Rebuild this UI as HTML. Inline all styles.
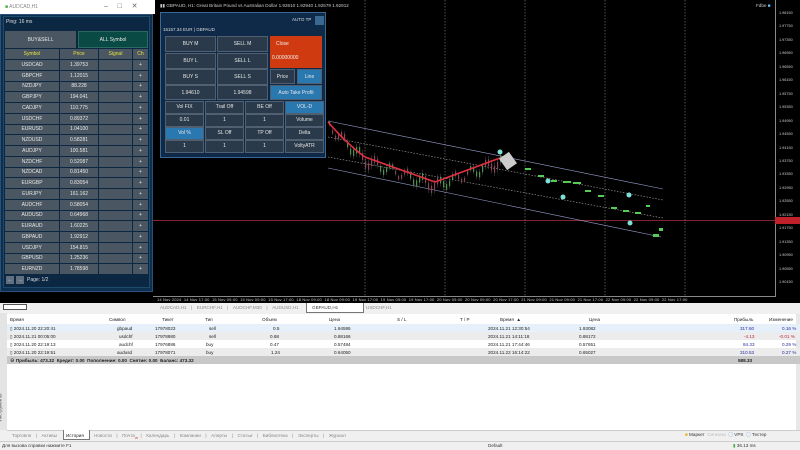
<!DOCTYPE html>
<html><head><meta charset="utf-8"><style>
*{margin:0;padding:0;box-sizing:border-box}
body{width:800px;height:450px;overflow:hidden;background:#f0f0f0;font-family:"Liberation Sans","Noto Sans CJK SC",sans-serif;position:relative}
.a{position:absolute}
.t{font-size:5px;white-space:nowrap}
.lp{background:#0b2742}
.c{position:absolute;display:flex;align-items:center;justify-content:center;font-size:5px;color:#e8e8e8;background:#4a5661;white-space:nowrap}
.tb{position:absolute;display:flex;align-items:center;justify-content:center;font-size:5px;color:#e6e6e6;background:#2a3a4a;border:1px solid #506070}
.row{position:absolute;left:0;width:796px;height:8px;font-size:4.6px;color:#222}
.row span{position:absolute;top:1.5px;white-space:nowrap}
</style></head><body>
<div class="a" style="left:153px;top:0;width:647px;height:303px;background:#000"></div>
<div class="a" style="left:0;top:290px;width:155px;height:13px;background:#000"></div>
<div class="a t" style="left:160px;top:3px;color:#ccc;font-size:4.6px">▮▮ GBPAUD, H1: Great Britain Pound vs Australian Dollar 1.92610 1.92940 1.92579 1.92912</div>
<div class="a t" style="left:756px;top:3px;color:#ccc;font-size:4.6px">Fdbe <span style="color:#6cf">■</span></div>
<div class="a" style="left:775px;top:0;width:1px;height:297px;background:#888"></div>
<div class="a" style="left:153px;top:296px;width:623px;height:1px;background:#888"></div>
<div id="pa"></div>
<svg class="a" style="left:153px;top:0" width="647" height="303">
<g stroke="#888" stroke-dasharray="1.5 1.5" stroke-width="0.6">
<line x1="212" y1="0" x2="212" y2="296"/><line x1="292" y1="0" x2="292" y2="296"/><line x1="372" y1="0" x2="372" y2="296"/><line x1="452" y1="0" x2="452" y2="296"/><line x1="532" y1="0" x2="532" y2="296"/>
</g>
<line x1="0" y1="220.5" x2="622" y2="220.5" stroke="#b03040" stroke-width="0.8"/>
<rect x="622" y="217" width="25" height="7" fill="#c0202a"/>
<g stroke="#9aa0d0" stroke-width="0.6" fill="none">
<line x1="175" y1="121" x2="510" y2="189"/><line x1="175" y1="168" x2="508" y2="237"/>
</g>
<g stroke="#aaa" stroke-width="0.6" stroke-dasharray="1.5 1.5">
<line x1="175" y1="137" x2="510" y2="200"/><line x1="175" y1="157" x2="510" y2="218"/>
</g>
<g id="cd"></g>
<path d="M175 122 Q195 145 212 157 L282 182 L347 158" stroke="#e03040" stroke-width="1.6" fill="none"/>
<g fill="#5c5">
<rect x="372" y="168" width="6" height="2"/><rect x="385" y="175" width="6" height="2"/><rect x="398" y="180" width="6" height="2"/><rect x="410" y="181" width="8" height="2"/><rect x="420" y="182" width="8" height="2"/><rect x="432" y="190" width="6" height="2"/><rect x="445" y="195" width="6" height="2"/><rect x="458" y="207" width="6" height="2"/><rect x="470" y="210" width="6" height="2"/><rect x="482" y="212" width="6" height="2"/><rect x="493" y="205" width="4" height="2"/><rect x="500" y="234" width="6" height="3"/><rect x="506" y="228" width="4" height="3"/>
</g>
<g fill="#7fe0d8"><circle cx="347" cy="152" r="2.5"/><circle cx="395" cy="181" r="2.5"/><circle cx="410" cy="197" r="2.5"/><circle cx="476" cy="195" r="2.5"/><circle cx="477" cy="223" r="2.5"/></g>
<rect x="349" y="154" width="12" height="14" fill="#ccc" transform="rotate(-35 355 161)"/>
</svg>
<div class="a t" style="left:157px;top:297px;color:#ccc;font-size:4px;letter-spacing:0.15px">14 Nov 2024 &nbsp;14 Nov 17:00 &nbsp;15 Nov 09:00 &nbsp;15 Nov 09:00 &nbsp;15 Nov 17:00 &nbsp;18 Nov 09:00 &nbsp;18 Nov 09:00 &nbsp;19 Nov 17:00 &nbsp;19 Nov 09:00 &nbsp;19 Nov 17:00 &nbsp;20 Nov 09:00 &nbsp;20 Nov 09:00 &nbsp;20 Nov 17:00 &nbsp;21 Nov 09:00 &nbsp;21 Nov 09:00 &nbsp;21 Nov 17:00 &nbsp;22 Nov 09:00 &nbsp;22 Nov 09:00 &nbsp;22 Nov 17:00</div>
<div class="a" style="left:0;top:0;width:155px;height:14px;background:#fff"></div>
<div class="a t" style="left:5px;top:4px;color:#888;font-size:5px"><span style="color:#4a4">■</span> AUDCAD,H1</div>
<div class="a t" style="left:104px;top:2px;color:#666;font-size:7px">–&nbsp;&nbsp;&nbsp;&nbsp;&nbsp;□&nbsp;&nbsp;&nbsp;&nbsp;&nbsp;✕</div>
<div class="a" style="left:0;top:14px;width:153px;height:278px;background:#0e3050;border:1px solid #2a5078"></div>
<div class="a lp" style="left:3px;top:16px;width:147px;height:272px;border:1px solid #1e4a6e"></div>
<div class="a t" style="left:6px;top:19px;color:#ddd">Ping: 16 ms</div>
<div class="c" style="left:5px;top:31px;width:71px;height:17px;font-size:5px">BUY&amp;SELL</div>
<div class="c" style="left:78px;top:31px;width:70px;height:17px;background:#0a4a44;border:1px solid #2a6a60">ALL Symbol</div>
<div id="lt"></div>
<div class="c" style="left:6px;top:276px;width:8px;height:8px;background:#607080">←</div>
<div class="c" style="left:16px;top:276px;width:8px;height:8px;background:#607080">→</div>
<div class="a t" style="left:27px;top:277px;color:#ddd">Page: 1/2</div>
<div class="a" style="left:160px;top:12px;width:166px;height:146px;background:#0e2a48;border:1px solid #3a6890"></div>
<div class="a t" style="left:292px;top:17px;color:#ddd;font-size:4.5px">AUTO TP</div>
<div class="a" style="left:315px;top:16px;width:9px;height:9px;background:#3a6890"></div>
<div class="a t" style="left:163px;top:27px;color:#ddd;font-size:4.5px">16157.34 EUR | GBPAUD</div>
<div id="tp"></div>
<div class="a" style="left:0;top:303px;width:800px;height:10px;background:#f0f0f0"></div>
<div class="a" style="left:3px;top:304px;width:24px;height:6px;background:#fff;border:1px solid #555"></div>
<div class="a t" style="left:160px;top:305px;color:#888;font-size:4.6px;word-spacing:1px">AUDCAD,H1 &nbsp;| &nbsp;EURCHF,H1 &nbsp;| &nbsp;AUDCHF,M30 &nbsp;| &nbsp;AUDUSD,H1</div>
<div class="a" style="left:306px;top:303px;width:58px;height:10px;background:#fff;border:1px solid #777;border-top:none"></div>
<div class="a t" style="left:312px;top:305px;color:#444;font-size:4.6px">GBPAUD,H1</div>
<div class="a t" style="left:366px;top:305px;color:#888;font-size:4.6px">USDCHF,H1</div>
<div class="a" style="left:0;top:313px;width:7px;height:117px;background:#e4e4e4"></div>
<div class="a t" style="left:-14px;top:405px;transform:rotate(-90deg);color:#555;font-size:4.5px">Инструменты</div>
<div class="a" style="left:7px;top:314px;width:789px;height:116px;background:#fff"></div>
<div class="a" style="left:796px;top:314px;width:4px;height:116px;background:#e8e8e8"></div>
<div class="a" style="left:7px;top:314px;width:789px;height:116px">
<div class="row" style="top:1px"><span style="left:3px">Время</span><span style="left:102px">Символ</span><span style="left:155px">Тикет</span><span style="left:198px">Тип</span><span style="left:255px">Объем</span><span style="left:322px">Цена</span><span style="left:390px">S / L</span><span style="left:453px">T / P</span><span style="left:493px">Время &nbsp;▲</span><span style="left:582px">Цена</span><span style="left:727px">Прибыль</span><span style="left:762px">Изменение</span></div>
<div class="row" style="top:10px;background:#e6f0fa"><span style="left:3px">▯ 2024.11.20 22:20:41</span><span style="left:110px">gbpaud</span><span style="left:148px">17978023</span><span style="left:202px">sell</span><span style="left:266px">0.5</span><span style="left:327px">1.94595</span><span style="left:481px">2024.11.21 12:30:54</span><span style="left:572px">1.93082</span><span style="left:733px;color:#2a2aa0">317.60</span><span style="left:775px;color:#2a2aa0">0.16 %</span></div>
<div class="row" style="top:18px;background:#ececec"><span style="left:3px">▯ 2024.11.21 00:05:00</span><span style="left:112px">usdchf</span><span style="left:148px">17978980</span><span style="left:202px">sell</span><span style="left:263px">0.68</span><span style="left:327px">0.88166</span><span style="left:481px">2024.11.21 14:11:18</span><span style="left:572px">0.88172</span><span style="left:737px;color:#c02040">-4.13</span><span style="left:772px;color:#c02040">-0.01 %</span></div>
<div class="row" style="top:26px"><span style="left:3px">▯ 2024.11.20 22:19:13</span><span style="left:112px">audchf</span><span style="left:148px">17976886</span><span style="left:199px">buy</span><span style="left:263px">0.47</span><span style="left:327px">0.57484</span><span style="left:481px">2024.11.21 17:44:46</span><span style="left:572px">0.57651</span><span style="left:736px;color:#2a2aa0">84.33</span><span style="left:775px;color:#2a2aa0">0.29 %</span></div>
<div class="row" style="top:34px;background:#ececec"><span style="left:3px">▯ 2024.11.20 22:19:51</span><span style="left:110px">audusd</span><span style="left:148px">17978071</span><span style="left:199px">buy</span><span style="left:264px">1.24</span><span style="left:327px">0.64050</span><span style="left:481px">2024.11.22 16:14:22</span><span style="left:572px">0.65027</span><span style="left:733px;color:#2a2aa0">310.53</span><span style="left:775px;color:#2a2aa0">0.27 %</span></div>
<div class="row" style="top:42px;background:#c8c8c8;font-weight:bold"><span style="left:3px">⊖ Прибыль: 473.32 &nbsp;Кредит: 0.00 &nbsp;Пополнение: 0.00 &nbsp;Снятие: 0.00 &nbsp;Баланс: 473.32</span><span style="left:731px">588.33</span></div>
</div>
<div class="a" style="left:7px;top:430px;width:793px;height:11px;background:#f0f0f0;border-top:1px solid #ccc"></div>
<div class="a t" style="left:12px;top:433px;color:#888;font-size:4.6px;word-spacing:1px">Торговля &nbsp;| &nbsp;Активы</div>
<div class="a" style="left:63px;top:430px;width:27px;height:10px;background:#fff;border:1px solid #777;border-top:none"></div>
<div class="a t" style="left:66px;top:433px;color:#222;font-size:4.6px">История</div>
<div class="a t" style="left:94px;top:433px;color:#888;font-size:4.6px;word-spacing:1px">Новости &nbsp;| &nbsp;Почта<sub style="color:#c33;font-size:3px">25</sub> | &nbsp;Календарь &nbsp;| &nbsp;Компании &nbsp;| &nbsp;Алерты &nbsp;| &nbsp;Статьи &nbsp;| &nbsp;Библиотека &nbsp;| &nbsp;Эксперты &nbsp;| &nbsp;Журнал</div>
<div class="a t" style="left:685px;top:432px;color:#333;font-size:4.6px"><span style="color:#e0b020">■</span> Маркет &nbsp;<span style="color:#bbb">Сигналы</span> &nbsp;<span style="color:#3a7ad0">◯</span> VPS &nbsp;<span style="color:#3a7ad0">◯</span> Тестер</div>
<div class="a" style="left:0;top:441px;width:800px;height:9px;background:#f0f0f0;border-top:1px solid #ccc"></div>
<div class="a t" style="left:2px;top:443px;color:#333;font-size:4.6px">Для вызова справки нажмите F1</div>
<div class="a t" style="left:488px;top:443px;color:#333;font-size:4.6px">Default</div>
<div class="a t" style="left:733px;top:443px;color:#333;font-size:4.6px"><span style="color:#4a4">▮</span> 36.13 ms</div>
<script>
var s="";
for(var i=0;i<21;i++){var v=(1.98150-i*0.0040).toFixed(5);s+='<div class="a t" style="left:779px;top:'+(11+i*13.45)+'px;color:#ccc;font-size:3.8px">'+v+'</div>'}
document.getElementById('pa').innerHTML=s;
// candles along curve
var c="";
function cy(x){if(x<212)return 122+(x-175)*35/37; if(x<282)return 157+(x-212)*25/70; return 182-(x-282)*24/65;}
for(var x=176;x<348;x+=3){var y=cy(x)+Math.sin(x*1.7)*5+4;var h=3+Math.abs(Math.sin(x))*4;var col=(Math.sin(x*2.3)>0)?"#4a4":"#a03050";c+='<rect x="'+x+'" y="'+(y-h/2)+'" width="1.2" height="'+h+'" fill="'+col+'"/><line x1="'+(x+0.6)+'" y1="'+(y-h)+'" x2="'+(x+0.6)+'" y2="'+(y+h)+'" stroke="#666" stroke-width="0.4"/>'}
document.getElementById('cd').innerHTML=c;
var rows=[["USDCAD","1.39753"],["GBPCHF","1.12015"],["NZDJPY","88.228"],["GBPJPY","194.041"],["CADJPY","110.775"],["USDCHF","0.89372"],["EURUSD","1.04100"],["NZDUSD","0.58281"],["AUDJPY","100.581"],["NZDCHF","0.52087"],["NZDCAD","0.81450"],["EURGBP","0.83054"],["EURJPY","161.162"],["AUDCHF","0.58054"],["AUDUSD","0.64968"],["EURAUD","1.60225"],["GBPAUD","1.92912"],["USDJPY","154.815"],["GBPUSD","1.25236"],["EURNZD","1.78598"]];
var cx=[[5,54],[60,38],[99,33],[133,15]];
s="";var h=["Symbol","Price","Signal","Ch"];
for(var j=0;j<4;j++)s+='<div class="c" style="left:'+cx[j][0]+'px;top:49px;width:'+cx[j][1]+'px;height:10px;color:#e8e040">'+h[j]+'</div>';
for(var i=0;i<20;i++){var y=60+i*10.75;var d=[rows[i][0],rows[i][1],"","+"];for(var j=0;j<4;j++)s+='<div class="c" style="left:'+cx[j][0]+'px;top:'+y+'px;width:'+cx[j][1]+'px;height:9.8px">'+d[j]+'</div>'}
document.getElementById('lt').innerHTML=s;
s="";
function b(x,y,w,hh,t,bg){s+='<div class="tb" style="left:'+x+'px;top:'+y+'px;width:'+w+'px;height:'+hh+'px'+(bg?';background:'+bg:'')+'">'+t+'</div>'}
b(165,36,51,16,"BUY M");b(217,36,51,16,"SELL M");b(165,53,51,16,"BUY L");b(217,53,51,16,"SELL L");b(165,69,51,16,"BUY S");b(217,69,51,16,"SELL S");b(165,85,51,15,"1.94610");b(217,85,51,15,"1.94598");
s+='<div class="a" style="left:270px;top:36px;width:52px;height:32px;background:#d03a10"><div class="a t" style="left:6px;top:5px;color:#eee">Close</div><div class="a t" style="left:2px;top:19px;color:#eee">0.00000000</div></div>';
b(270,69,25,15,"Price");b(297,69,25,15,"Line","#2a78b0");b(270,85,52,15,"Auto Take Profit","#2a78b0");
var g=[["Vol FIX","Trail Off","BE Off","VOL-D"],["0.01","1","1","Volume"],["Vol %","SL Off","TP Off","Delta"],["1","1","1","VoltyATR"]];
var gx=[165,205,245,285];
for(var r=0;r<4;r++)for(var q=0;q<4;q++){var bg=(r==0&&q==3)||(r==2&&q==0)?"#2a78b0":"";b(gx[q],101+r*13,39,12.5,g[r][q],bg)}
document.getElementById('tp').innerHTML=s;
</script>
</body></html>
